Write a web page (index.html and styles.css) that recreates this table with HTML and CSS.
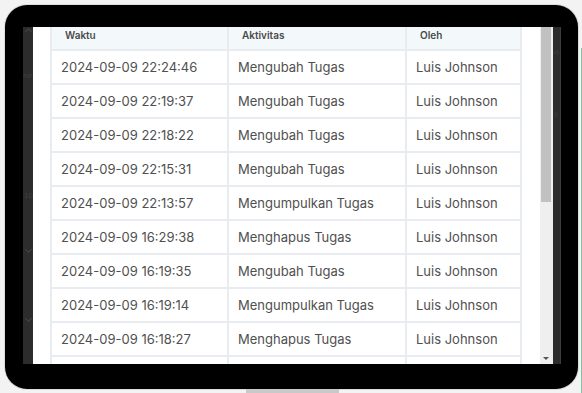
FILE: index.html
```html
<!DOCTYPE html>
<html>
<head>
<meta charset="utf-8">
<link rel="stylesheet" href="styles.css">
</head>
<body>
<div class="device">
  <div class="frame">
    <div class="screen">
      <div class="side side-left">
        <span class="chev up c-top"></span>
        <span class="ghost g2">ne</span>
        <span class="ghost g3">10</span>
        <span class="chev c-a"></span>
        <span class="chev c-b"></span>
      </div>
      <div class="content">
        <table class="log">
          <colgroup>
            <col class="c1"><col class="c2"><col class="c3">
          </colgroup>
          <thead>
            <tr><th>Waktu</th><th>Aktivitas</th><th>Oleh</th></tr>
          </thead>
          <tbody>
            <tr><td>2024-09-09 22:24:46</td><td>Mengubah Tugas</td><td>Luis Johnson</td></tr>
            <tr><td>2024-09-09 22:19:37</td><td>Mengubah Tugas</td><td>Luis Johnson</td></tr>
            <tr><td>2024-09-09 22:18:22</td><td>Mengubah Tugas</td><td>Luis Johnson</td></tr>
            <tr><td>2024-09-09 22:15:31</td><td>Mengubah Tugas</td><td>Luis Johnson</td></tr>
            <tr><td>2024-09-09 22:13:57</td><td>Mengumpulkan Tugas</td><td>Luis Johnson</td></tr>
            <tr><td>2024-09-09 16:29:38</td><td>Menghapus Tugas</td><td>Luis Johnson</td></tr>
            <tr><td>2024-09-09 16:19:35</td><td>Mengubah Tugas</td><td>Luis Johnson</td></tr>
            <tr><td>2024-09-09 16:19:14</td><td>Mengumpulkan Tugas</td><td>Luis Johnson</td></tr>
            <tr><td>2024-09-09 16:18:27</td><td>Menghapus Tugas</td><td>Luis Johnson</td></tr>
            <tr><td></td><td></td><td></td></tr>
          </tbody>
        </table>
      </div>
      <div class="scrollbar">
        <div class="thumb"></div>
        <div class="arrow"></div>
      </div>
      <div class="side side-right">
        <span class="ghost r1">ut</span>
        <span class="ghost r2">ll</span>
      </div>
    </div>
  </div>
  <div class="base"></div>
</div>
</body>
</html>
```

FILE: styles.css
```css
html, body {
  margin: 0;
  padding: 0;
}
body {
  width: 582px;
  height: 393px;
  overflow: hidden;
  background: #f3f3f3;
  font-family: Inter, "Open Sans", sans-serif;
  position: relative;
}
body::after {
  content: "";
  position: absolute;
  right: 0;
  top: 48px;
  width: 1px;
  height: 345px;
  background: #7fc3a0;
}
.device {
  display: flex;
  flex-direction: column;
  align-items: center;
  padding-top: 5px;
}
.frame {
  width: 573px;
  height: 384px;
  box-sizing: border-box;
  margin-left: 1px;
  background: #000;
  border-radius: 22px;
  padding: 22px 17px 24px 18px;
  box-shadow: 0 0 0 1px #dcdcdc;
}
.screen {
  display: flex;
  height: 337px;
  background: #fff;
  overflow: hidden;
}
.side {
  background: #2c2c2c;
  position: relative;
  overflow: hidden;
}
.side-left {
  width: 10px;
}
.side-right {
  width: 8px;
  border-right: 1px solid #3c3c3c;
  box-sizing: border-box;
}
.ghost {
  position: absolute;
  color: #404040;
  font-size: 7px;
  line-height: 8px;
  font-family: "DejaVu Sans", sans-serif;
}
.g2 { left: 0; top: 45px; }
.g3 { left: 1px; top: 165px; }
.r1 { left: 0; top: 21px; font-size: 6px; }
.r2 { left: 1px; top: 84px; }
.chev {
  position: absolute;
  left: 3px;
  width: 4px;
  height: 4px;
  border-right: 1px solid #454545;
  border-bottom: 1px solid #454545;
  transform: rotate(45deg);
}
.chev.up {
  transform: rotate(-135deg);
}
.c-top { top: 2px; }
.c-a { top: 220px; }
.c-b { top: 289px; }
.content {
  flex: 1;
  padding-left: 17px;
  overflow: hidden;
  background: #fff;
}
.log {
  width: 470px;
  table-layout: fixed;
  border-collapse: collapse;
  color: #505050;
}
.c1 { width: 177px; }
.c2 { width: 178px; }
.c3 { width: 115px; }
.log th,
.log td {
  border: 2px solid #e8ecf0;
  text-align: left;
  white-space: nowrap;
}
.log th {
  border-top: none;
  background: #f3f9fa;
  font-size: 10px;
  font-weight: 600;
  color: #4a4a4a;
  height: 23px;
  box-sizing: border-box;
  padding: 0 0 6px 13px;
}
.log td {
  height: 32px;
  padding: 0 0 0 9px;
  font-size: 13px;
}
.scrollbar {
  width: 13px;
  background: #efefef;
  position: relative;
}
.thumb {
  margin-left: 1px;
  width: 10px;
  height: 175px;
  background: #c1c1c1;
}
.arrow {
  position: absolute;
  left: 3px;
  bottom: 4px;
  width: 0;
  height: 0;
  border-left: 3px solid transparent;
  border-right: 3px solid transparent;
  border-top: 3px solid #555;
}
.base {
  width: 93px;
  height: 4px;
  background: #c9c9c9;
  margin-left: 3px;
}
```
